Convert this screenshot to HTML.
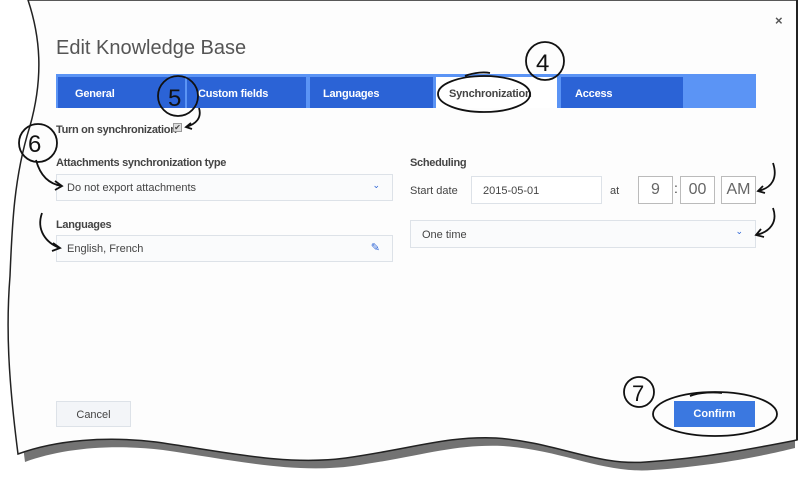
<!DOCTYPE html>
<html><head><meta charset="utf-8"><style>
*{margin:0;padding:0;box-sizing:border-box}
body{width:800px;height:477px;background:#fff;position:relative;overflow:hidden;font-family:"Liberation Sans",sans-serif;color:#444}
.a{position:absolute}
.tab{position:absolute;top:77px;height:31px;background:#2b63d6;color:#fff;font-size:11px;font-weight:bold;line-height:35px;padding-left:17px;letter-spacing:-0.2px}
.lbl{font-size:11px;font-weight:bold;color:#444;letter-spacing:-0.3px}
.box{position:absolute;border:1px solid #dde2e8;background:#fafbfc;font-size:11px;color:#444}
</style></head><body>
<svg class="a" style="left:0;top:0" width="800" height="477">
<path d="M32,4 C44,40 48,80 34,130 C18,180 16,230 14,280 C10,330 12,380 22,458 C60,444 110,440 160,446 C230,456 290,470 350,462 C420,452 450,440 500,442 C560,446 600,470 650,466 C710,462 760,452 792,444 L792,4 Z" fill="#444" opacity="0.75" transform="translate(3,4)"/>
<path d="M28,0 C40,36 44,76 30,126 C14,176 12,226 10,276 C6,326 8,376 18,454 C56,440 106,436 156,442 C226,452 286,466 346,458 C416,448 446,436 496,438 C556,442 596,466 646,462 C706,458 756,448 797,440 L797,0 Z" fill="#fdfdfd" stroke="#222" stroke-width="1.5"/>
<path d="M797,0 L797,440" stroke="#222" stroke-width="2"/>
</svg>
<div class="a" style="left:56px;top:37px;font-size:20px;color:#555">Edit Knowledge Base</div>
<div class="a" style="left:775px;top:13px;font-size:13px;font-weight:bold;color:#555">×</div>
<div class="a" style="left:56px;top:74px;width:700px;height:34px;background:#5b94f5"></div>
<div class="tab" style="left:58px;width:127px">General</div>
<div class="tab" style="left:187px;width:119px;padding-left:11px">Custom fields</div>
<div class="tab" style="left:310px;width:123px;padding-left:13px">Languages</div>
<div class="tab" style="left:436px;width:121px;background:#fff;color:#444;padding-left:13px">Synchronization</div>
<div class="tab" style="left:561px;width:122px;padding-left:14px">Access</div>
<div class="a lbl" style="left:56px;top:124px">Turn on synchronization</div>
<div class="a" style="left:173px;top:123px;width:9px;height:9px;border:1px solid #999;background:#ddd;font-size:8px;line-height:8px;text-align:center">✔</div>
<div class="a lbl" style="left:56px;top:157px">Attachments synchronization type</div>
<div class="box" style="left:56px;top:174px;width:337px;height:27px;padding:7px 10px">Do not export attachments<span style="position:absolute;right:12px;top:5px;color:#2b63d6;font-size:9px">⌄</span></div>
<div class="a lbl" style="left:56px;top:219px">Languages</div>
<div class="box" style="left:56px;top:235px;width:337px;height:27px;padding:7px 10px">English, French<span style="position:absolute;right:12px;top:5px;color:#2b63d6;font-size:11px">✎</span></div>
<div class="a lbl" style="left:410px;top:157px">Scheduling</div>
<div class="a" style="left:410px;top:185px;font-size:11px">Start date</div>
<div class="box" style="left:471px;top:176px;width:131px;height:28px;padding:8px 11px;background:#fff">2015-05-01</div>
<div class="a" style="left:610px;top:185px;font-size:11px">at</div>
<div class="box" style="left:638px;top:176px;width:35px;height:28px;background:#fff;border-color:#bbb;font-size:16px;text-align:center;line-height:26px;color:#666">9</div>
<div class="a" style="left:674px;top:180px;font-size:14px">:</div>
<div class="box" style="left:680px;top:176px;width:35px;height:28px;background:#fff;border-color:#bbb;font-size:16px;text-align:center;line-height:26px;color:#666">00</div>
<div class="box" style="left:721px;top:176px;width:35px;height:28px;background:#fff;border-color:#bbb;font-size:16px;text-align:center;line-height:26px;color:#666">AM</div>
<div class="box" style="left:410px;top:220px;width:346px;height:28px;padding:8px 11px">One time<span style="position:absolute;right:12px;top:5px;color:#2b63d6;font-size:9px">⌄</span></div>
<div class="a" style="left:56px;top:401px;width:75px;height:26px;border:1px solid #dde2e8;background:#f3f5f8;font-size:11px;text-align:center;line-height:26px">Cancel</div>
<div class="a" style="left:674px;top:401px;width:81px;height:26px;background:#3b78e0;color:#fff;font-weight:bold;font-size:11px;text-align:center;line-height:27px">Confirm</div>
<svg class="a" style="left:0;top:0" width="800" height="477" fill="none" stroke="#111" stroke-width="1.8">
<ellipse cx="484" cy="94" rx="46" ry="18"/><path d="M465,76 C475,72 485,72 490,73"/>
<circle cx="545" cy="61" r="19"/><text x="536" y="71" font-size="24" fill="#111" stroke="none" font-family="Liberation Sans">4</text>
<circle cx="178" cy="96" r="20"/><text x="168" y="106" font-size="24" fill="#111" stroke="none" font-family="Liberation Sans">5</text>
<path d="M199,108 C202,118 196,124 186,127 M191,123 L186,127 L192,129"/>
<circle cx="38" cy="143" r="19"/><text x="28" y="152" font-size="24" fill="#111" stroke="none" font-family="Liberation Sans">6</text>
<path d="M36,160 C40,175 48,184 62,186 M55,181 L62,186 L55,190"/>
<path d="M42,213 C36,230 46,243 60,248 M53,243 L60,248 L52,251"/>
<path d="M773,163 C778,178 772,188 758,191 M763,186 L758,191 L765,193"/>
<path d="M773,208 C778,222 770,232 756,235 M761,229 L756,235 L764,237"/>
<circle cx="639" cy="392" r="15"/><text x="632" y="401" font-size="22" fill="#111" stroke="none" font-family="Liberation Sans">7</text>
<ellipse cx="715" cy="414" rx="62" ry="22"/><path d="M690,396 C700,392 715,392 722,393"/>
</svg>
</body></html>
